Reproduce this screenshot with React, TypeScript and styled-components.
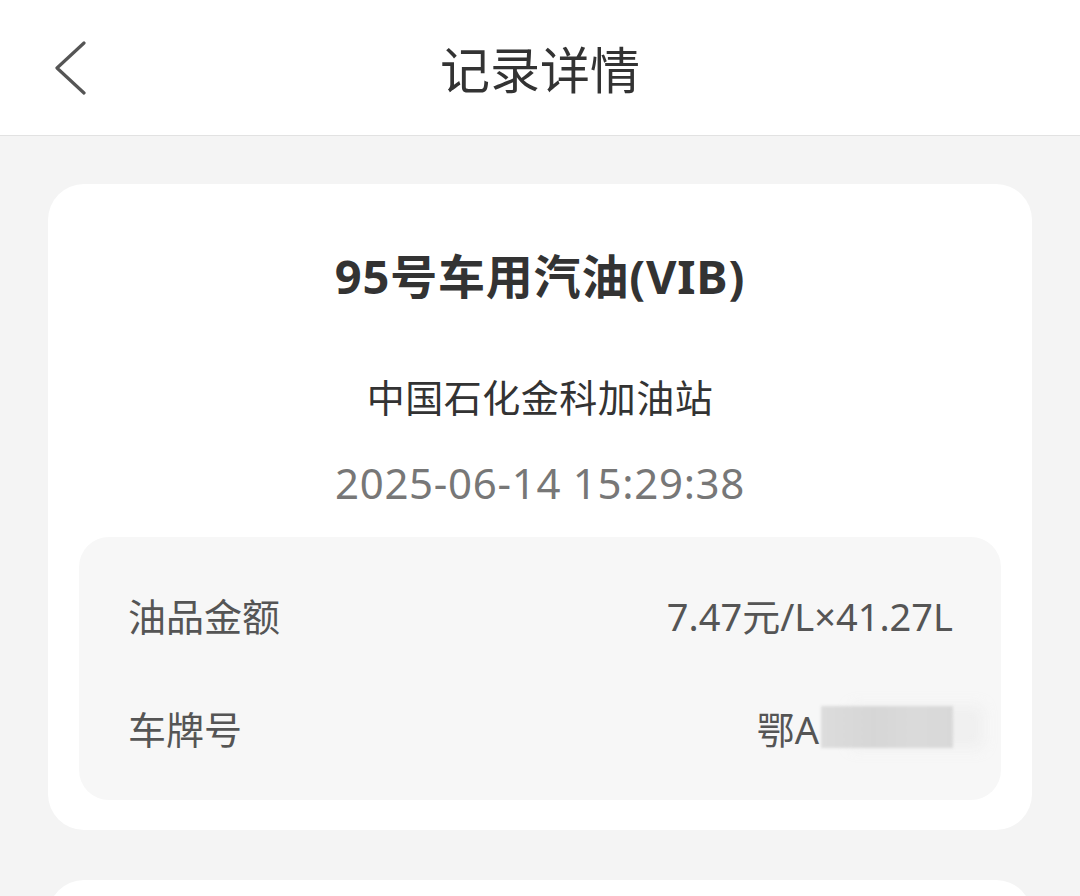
import React from 'react';
import styled, { createGlobalStyle } from 'styled-components';

const GlobalStyle = createGlobalStyle`
  html, body {
    margin: 0;
    padding: 0;
    background: #f4f4f4;
    font-family: "Noto Sans", "Noto Sans CJK SC", sans-serif;
  }
`;

const Page = styled.div`
  width: 1080px;
  min-height: 896px;
  background: #f4f4f4;
  overflow: hidden;
`;

const Header = styled.header`
  height: 135px;
  background: #fff;
  border-bottom: 1px solid #e2e2e2;
  display: grid;
  grid-template-columns: 160px 1fr 160px;
  align-items: center;
`;

const BackButton = styled.button`
  background: transparent;
  border: none;
  padding: 0 0 0 52px;
  height: 60px;
  display: flex;
  align-items: center;
  cursor: pointer;
`;

const Title = styled.h1`
  margin: 0;
  text-align: center;
  font-size: 50px;
  font-weight: 400;
  color: #333;
`;

const Content = styled.main`
  padding: 48px 48px 0;
  display: flex;
  flex-direction: column;
  gap: 50px;
`;

const Card = styled.section`
  background: #fff;
  border-radius: 36px;
  padding: 62px 31px 30px;
  display: flex;
  flex-direction: column;
  align-items: center;
`;

const Product = styled.h2`
  margin: 0;
  font-size: 47px;
  line-height: 60px;
  font-weight: 700;
  letter-spacing: 0.8px;
  color: #333;
`;

const Station = styled.div`
  margin-top: 66px;
  font-size: 38px;
  line-height: 50px;
  letter-spacing: 0.5px;
  color: #333;
`;

const DateText = styled.div`
  margin-top: 36px;
  font-size: 42px;
  line-height: 50px;
  letter-spacing: 0.7px;
  color: #777;
`;

const InfoBox = styled.div`
  align-self: stretch;
  margin-top: 29px;
  background: #f7f7f7;
  border-radius: 30px;
  padding: 52px 48px 48px 49px;
  display: flex;
  flex-direction: column;
  gap: 63px;
`;

const Row = styled.div`
  display: flex;
  justify-content: space-between;
  align-items: center;
  height: 50px;
  font-size: 38px;
  color: #555;
`;

const Value = styled.span`
  display: flex;
  align-items: center;
  color: #555;
`;

const Masked = styled.span`
  display: inline-block;
  width: 132px;
  height: 42px;
  margin-left: 2px;
  background: linear-gradient(90deg, #dcdcdc 0%, #d6d6d6 40%, #dadada 70%, #d8d8d8 100%);
  filter: blur(1.5px);
  box-shadow: 30px 0 12px rgba(225, 225, 225, 0.35);
`;

const NextCard = styled.section`
  background: #fff;
  border-radius: 36px 36px 0 0;
  height: 40px;
`;

export default function App() {
  return (
    <Page>
      <GlobalStyle />
      <Header>
        <BackButton aria-label="返回">
          <svg width="34" height="56" viewBox="0 0 34 56">
            <polyline points="32,3 5,28 32,53" fill="none" stroke="#555" strokeWidth="3.2" strokeLinecap="round" strokeLinejoin="round" />
          </svg>
        </BackButton>
        <Title>记录详情</Title>
        <div />
      </Header>
      <Content>
        <Card>
          <Product>95号车用汽油(VIB)</Product>
          <Station>中国石化金科加油站</Station>
          <DateText>2025-06-14 15:29:38</DateText>
          <InfoBox>
            <Row>
              <span>油品金额</span>
              <Value>7.47元/L×41.27L</Value>
            </Row>
            <Row>
              <span>车牌号</span>
              <Value>
                鄂A
                <Masked />
              </Value>
            </Row>
          </InfoBox>
        </Card>
        <NextCard />
      </Content>
    </Page>
  );
}
